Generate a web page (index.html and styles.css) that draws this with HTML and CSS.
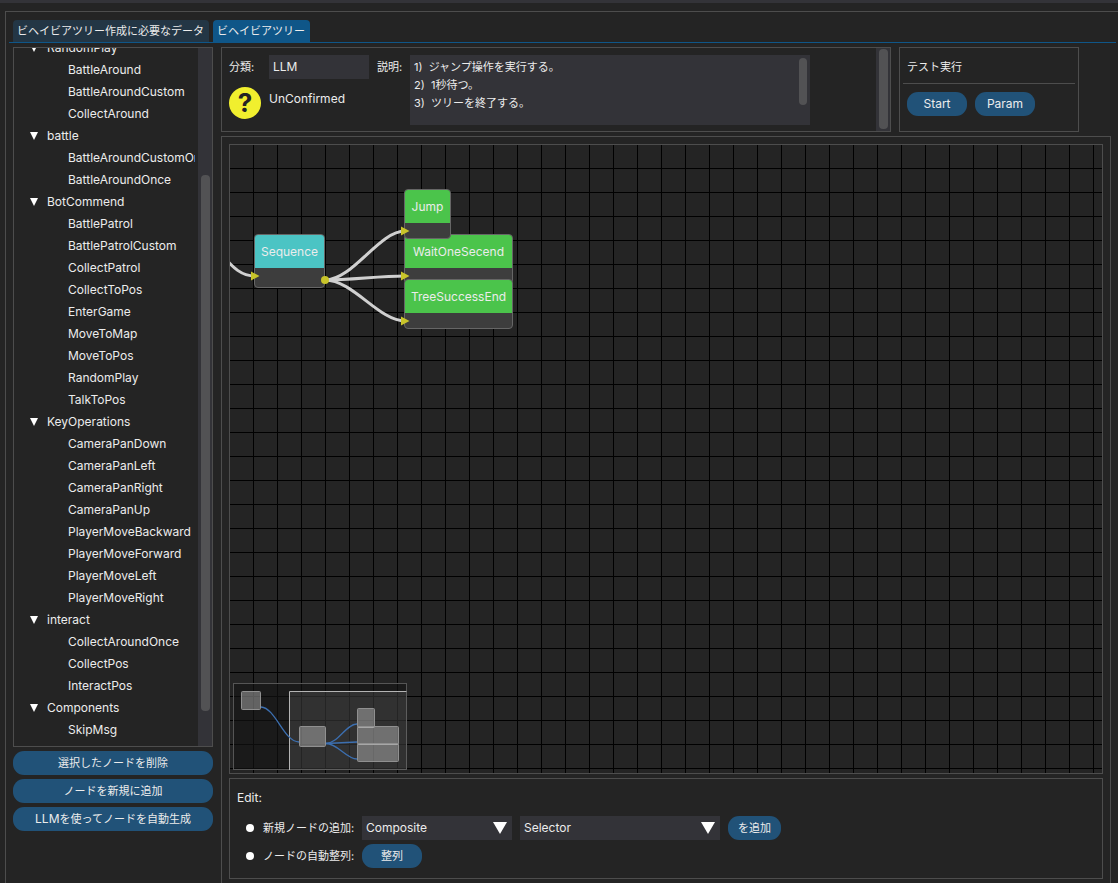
FILE: index.html
```html
<!DOCTYPE html>
<html lang="ja">
<head>
<meta charset="utf-8">
<title>ビヘイビアツリー</title>
<link rel="stylesheet" href="styles.css">
</head>
<body>
<div class="topbar"></div>
<main class="window">
  <nav class="tabs" role="tablist">
    <button class="tab" role="tab" aria-selected="false">ビヘイビアツリー作成に必要なデータ</button>
    <button class="tab active" role="tab" aria-selected="true">ビヘイビアツリー</button>
  </nav>
  <div class="workspace">
    <aside class="sidebar">
      <div class="tree">
        <ul class="tree-list">
          <li class="group">RandomPlay</li>
          <li>BattleAround</li>
          <li>BattleAroundCustom</li>
          <li>CollectAround</li>
          <li class="group">battle</li>
          <li>BattleAroundCustomOnce</li>
          <li>BattleAroundOnce</li>
          <li class="group">BotCommend</li>
          <li>BattlePatrol</li>
          <li>BattlePatrolCustom</li>
          <li>CollectPatrol</li>
          <li>CollectToPos</li>
          <li>EnterGame</li>
          <li>MoveToMap</li>
          <li>MoveToPos</li>
          <li>RandomPlay</li>
          <li>TalkToPos</li>
          <li class="group">KeyOperations</li>
          <li>CameraPanDown</li>
          <li>CameraPanLeft</li>
          <li>CameraPanRight</li>
          <li>CameraPanUp</li>
          <li>PlayerMoveBackward</li>
          <li>PlayerMoveForward</li>
          <li>PlayerMoveLeft</li>
          <li>PlayerMoveRight</li>
          <li class="group">interact</li>
          <li>CollectAroundOnce</li>
          <li>CollectPos</li>
          <li>InteractPos</li>
          <li class="group">Components</li>
          <li>SkipMsg</li>
        </ul>
        <div class="scrollbar tree-scroll"><div class="thumb"></div></div>
      </div>
      <button class="btn">選択したノードを削除</button>
      <button class="btn">ノードを新規に追加</button>
      <button class="btn"><span class="latin">LLM</span>を使ってノードを自動生成</button>
    </aside>
    <div class="content">
      <div class="info-row">
        <section class="panel info">
          <div class="info-body">
            <div class="fields">
              <label for="category">分類:</label>
              <input id="category" class="field latin" type="text" value="LLM">
              <span class="status-icon" aria-hidden="true">?</span>
              <span class="status latin">UnConfirmed</span>
            </div>
            <label class="desc-label" for="description">説明:</label>
            <div class="desc">
              <textarea id="description" class="field">1)  ジャンプ操作を実行する。
2)  1秒待つ。
3)  ツリーを終了する。</textarea>
              <div class="desc-thumb"></div>
            </div>
          </div>
          <div class="scrollbar"><div class="thumb"></div></div>
        </section>
        <section class="panel test">
          <h2>テスト実行</h2>
          <div class="test-buttons">
            <button class="btn latin">Start</button>
            <button class="btn latin">Param</button>
          </div>
        </section>
      </div>
      <section class="editor">
        <div class="canvas">
          <svg class="links" width="300" height="200" viewBox="0 0 300 200">
            <g fill="none" stroke="#d0d0d0" stroke-width="3">
              <path d="M-8 110C2 121 10 131 25 131"/>
              <path d="M95 135C123 135 149 86 175 86"/>
              <path d="M95 135C121 135 149 131 175 131"/>
              <path d="M95 135C123 135 149 176 175 176"/>
            </g>
          </svg>
          <div class="node wait"><div class="title">WaitOneSecend</div></div>
          <div class="node success"><div class="title">TreeSuccessEnd</div></div>
          <div class="node jump"><div class="title">Jump</div></div>
          <div class="node sequence"><div class="title">Sequence</div></div>
          <svg class="links" width="300" height="200" viewBox="0 0 300 200">
            <g fill="#c8c42a">
              <path d="M21 126.500L29.500 131L21 135.500Z"/>
              <path d="M171 81.500L179.500 86L171 90.500Z"/>
              <path d="M171 126.500L179.500 131L171 135.500Z"/>
              <path d="M171 171.500L179.500 176L171 180.500Z"/>
              <circle cx="95" cy="135" r="4"/>
            </g>
          </svg>
          <svg class="minimap" width="174" height="87" viewBox="0 0 174 87">
            <rect x=".5" y=".5" width="173" height="86" fill="#141414" fill-opacity=".6" stroke="#555"/>
            <rect x="56.500" y="8.500" width="117" height="78" fill="#fff" fill-opacity=".1"/>
            <path d="M173.500 8.500H56.500V87" fill="none" stroke="#b4b4b4"/>
            <g fill="none" stroke="#3c6fb0" stroke-width="1.300">
              <path d="M28 24C43 25 50 58 66 59"/>
              <path d="M93 60.500C105 60.500 113 41 124 41"/>
              <path d="M93 60.500L124 59"/>
              <path d="M93 60.500C105 60.500 113 76 124 76"/>
            </g>
            <g fill="#c8c8c8" fill-opacity=".42" stroke="#909090">
              <rect x="8.500" y="8.500" width="19" height="18" rx="1"/>
              <rect x="66.500" y="43.500" width="26" height="20" rx="1"/>
              <rect x="124.500" y="25.500" width="17" height="19" rx="1"/>
              <rect x="124.500" y="43.500" width="41" height="18" rx="1"/>
              <rect x="124.500" y="60.500" width="41" height="18" rx="1"/>
            </g>
          </svg>
        </div>
        <section class="edit">
          <h2 class="latin">Edit:</h2>
          <div class="edit-row">
            <span class="bullet"></span>
            <label class="edit-label" for="kind">新規ノードの追加:</label>
            <div class="select kind">
              <select id="kind" class="field latin"><option>Composite</option></select>
              <svg width="14" height="12" viewBox="0 0 14 12"><path d="M0 0H14L7 12Z" fill="#fff"/></svg>
            </div>
            <div class="select type">
              <select class="field latin" aria-label="ノード"><option>Selector</option></select>
              <svg width="14" height="12" viewBox="0 0 14 12"><path d="M0 0H14L7 12Z" fill="#fff"/></svg>
            </div>
            <button class="btn add">を追加</button>
          </div>
          <div class="edit-row">
            <span class="bullet"></span>
            <span class="edit-label">ノードの自動整列:</span>
            <button class="btn align">整列</button>
          </div>
        </section>
      </section>
    </div>
  </div>
</main>
</body>
</html>
```
FILE: styles.css
```css
* { box-sizing: border-box; }
body {
  margin: 0;
  height: 100vh;
  display: flex;
  flex-direction: column;
  overflow: hidden;
  background: #242424;
  color: #ececec;
  font: 11px/22px Inter, "Noto Sans CJK JP", sans-serif;
}
button, input, select, textarea {
  font: inherit;
  color: inherit;
  border: 0;
  margin: 0;
  padding: 0;
}
h2 { margin: 0; font-size: inherit; font-weight: 400; }
.latin, .tree, .node { font-size: 12px; }

.topbar { flex: none; height: 3px; background: #333338; }
.window {
  flex: 1;
  min-height: 0;
  display: flex;
  flex-direction: column;
  margin: 8px 0 0 5px;
  padding-top: 8px;
  border: solid #4d4d4d;
  border-width: 1px 0 0 1px;
}
.tabs {
  display: flex;
  gap: 4px;
  margin: 0 2px 0 3px;
  padding-left: 4px;
  border-bottom: 1px solid #0f5688;
}
.tab {
  height: 22px;
  padding: 0 5px 0 4px;
  border-radius: 4px 4px 0 0;
  background: #233645;
  white-space: nowrap;
}
.tab.active { background: #0f5688; }

.workspace {
  flex: 1;
  min-height: 0;
  display: flex;
  gap: 8px;
  padding: 4px 7px 0;
}
.sidebar {
  flex: none;
  width: 200px;
  display: flex;
  flex-direction: column;
  gap: 4px;
  padding-bottom: 52px;
}
.tree {
  flex: 1;
  min-height: 0;
  display: flex;
  border: 1px solid #4d4d4d;
}
.tree-list {
  flex: 1;
  min-width: 0;
  display: flex;
  flex-direction: column;
  justify-content: flex-end;
  overflow: hidden;
  list-style: none;
  margin: 0 3px 0 0;
  padding: 0 0 5px 16px;
}
.tree-list li { flex: none; height: 22px; padding-left: 38px; white-space: nowrap; }
.tree-list .group { display: flex; align-items: center; gap: 9px; padding-left: 0; }
.group::before {
  content: "";
  width: 8px;
  height: 8px;
  background: #fff;
  clip-path: polygon(0 0, 100% 0, 50% 100%);
}
.scrollbar { flex: none; width: 14px; padding: 1px 2px 2px 3px; background: #333338; }
.thumb { height: 100%; border-radius: 4px; background: #525254; }
.tree-scroll { display: flex; align-items: flex-end; padding-bottom: 35px; }
.tree-scroll .thumb { flex: 1; height: 81%; }

.btn {
  height: 24px;
  border-radius: 11px;
  background: #215278;
  line-height: 24px;
  white-space: nowrap;
}
.field { background: #333338; border-radius: 0; outline: 0; }

.content { flex: 1; min-width: 0; display: flex; flex-direction: column; gap: 4px; }
.info-row { flex: none; display: flex; gap: 8px; }
.panel { border: 1px solid #4d4d4d; }
.info { flex: 0 1 670px; min-width: 0; display: flex; }
.info-body { flex: 1; min-width: 0; display: flex; gap: 8px; padding: 7px 7px 6px; }
.fields {
  display: grid;
  grid-template-columns: 32px 100px;
  grid-template-rows: 24px 32px;
  gap: 8px;
}
.fields label, .desc-label { line-height: 24px; white-space: nowrap; }
.fields .field { width: 100px; padding: 0 4px; }
.desc-label { flex: none; width: 25px; }
.status-icon {
  border-radius: 50%;
  background: #f1ef2e;
  color: #242424;
  font: 700 26px/32px Inter, sans-serif;
  text-align: center;
}
.status { line-height: 24px; }
.desc { position: relative; flex: 0 1 400px; min-width: 0; }
.desc textarea {
  display: block;
  width: 100%;
  height: 70px;
  padding: 3px 4px;
  line-height: 18px;
  resize: none;
  overflow: hidden;
}
.desc-thumb {
  position: absolute;
  top: 3px;
  right: 3px;
  width: 8px;
  height: 47px;
  border-radius: 4px;
  background: #525254;
}
.test { flex: none; width: 180px; padding: 7px 3px; }
.test h2 { padding: 0 4px 4px; line-height: 24px; border-bottom: 1px solid #4d4d4d; }
.test-buttons { display: flex; gap: 8px; padding: 8px 4px; }
.test .btn { width: 60px; }

.editor {
  flex: 1;
  min-height: 0;
  display: flex;
  flex-direction: column;
  gap: 4px;
  padding: 7px 7px 4px;
  border: solid #4d4d4d;
  border-width: 1px 1px 0;
}
.canvas {
  flex: 1;
  min-height: 0;
  position: relative;
  overflow: hidden;
  border: 1px solid #4d4d4d;
  background:
    linear-gradient(#000 1px, transparent 1px) 0 23px / 24px 24px,
    linear-gradient(90deg, #000 1px, transparent 1px) 23px 0 / 24px 24px;
}
.links { position: absolute; top: 0; left: 0; }
.node {
  position: absolute;
  height: 50px;
  border: 1px solid #666;
  border-radius: 4px;
  background: #3d3d3d;
  overflow: hidden;
}
.title { height: 33px; line-height: 33px; text-align: center; background: #4bc44b; }
.sequence { left: 24px; top: 89px; width: 71px; height: 54px; }
.sequence .title { background: #4bc4c4; }
.jump { left: 174px; top: 44px; width: 47px; }
.wait { left: 174px; top: 89px; width: 109px; }
.success { left: 174px; top: 134px; width: 109px; }
.minimap { position: absolute; left: 3px; bottom: 3px; }

.edit {
  flex: none;
  display: flex;
  flex-direction: column;
  gap: 4px;
  padding: 7px 7px 10px;
  border: 1px solid #4d4d4d;
}
.edit h2 { line-height: 24px; padding-bottom: 2px; }
.edit-row { display: flex; align-items: center; gap: 8px; padding-left: 9px; }
.bullet { width: 8px; height: 8px; border-radius: 50%; background: #fff; }
.edit-label { width: 92px; padding-left: 1px; line-height: 24px; white-space: nowrap; }
.select { position: relative; }
.select select { appearance: none; width: 100%; height: 24px; padding: 0 24px 0 4px; display: block; }
.select svg { position: absolute; right: 5px; top: 6px; pointer-events: none; }
.kind { width: 150px; }
.type { width: 200px; }
.add { width: 53px; }
.align { width: 60px; }
```
